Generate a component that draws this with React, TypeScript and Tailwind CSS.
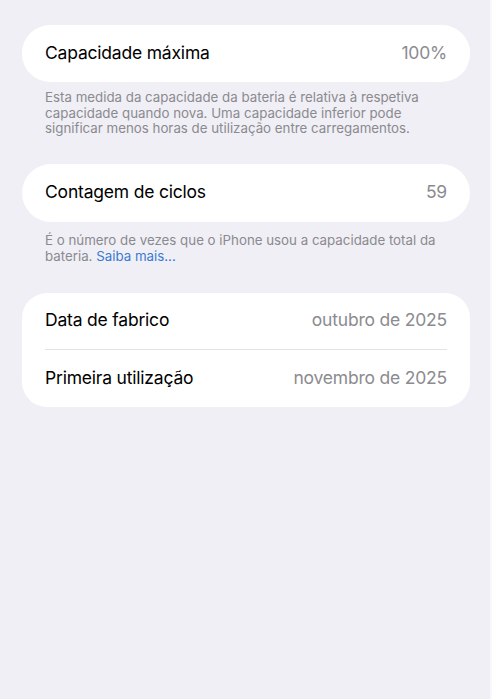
export default function App() {
  const font = { fontFamily: 'Inter, "Noto Sans", sans-serif' }
  return (
    <div
      className="min-h-[699px] w-full bg-[#f0eff5] border-r-2 border-[#f8f8fa] pl-[22px] pr-[20px] pt-[25px] antialiased"
      style={font}
    >
      <div className="flex h-[57px] items-center justify-between rounded-[28px] bg-white px-[23px] text-[17.5px] tracking-[-0.2px]">
        <span className="text-black">Capacidade máxima</span>
        <span className="text-[#8b8b90]">100%</span>
      </div>
      <p className="px-[23px] pt-[8px] text-[13.3px] leading-[15.5px] text-[#8a8a8f]">
        Esta medida da capacidade da bateria é relativa à respetiva capacidade quando nova. Uma capacidade inferior pode
        significar menos horas de utilização entre carregamentos.
      </p>

      <div className="mt-[27px] flex h-[58px] items-center justify-between rounded-[29px] bg-white px-[23px] text-[17.5px] tracking-[-0.2px]">
        <span className="text-black">Contagem de ciclos</span>
        <span className="text-[#8b8b90]">59</span>
      </div>
      <p className="px-[23px] pt-[10px] text-[13.3px] leading-[16px] text-[#8a8a8f]">
        É o número de vezes que o iPhone usou a capacidade total da bateria.{' '}
        <span className="text-[#3a7ad3]">Saiba mais...</span>
      </p>

      <div className="mt-[29px] rounded-[25px] bg-white px-[23px] text-[17.5px] tracking-[-0.2px]">
        <div className="flex h-[57px] items-center justify-between border-b border-[#e3e3e6]">
          <span className="text-black">Data de fabrico</span>
          <span className="text-[#8b8b90]">outubro de 2025</span>
        </div>
        <div className="flex h-[57px] items-center justify-between">
          <span className="text-black">Primeira utilização</span>
          <span className="text-[#8b8b90]">novembro de 2025</span>
        </div>
      </div>
    </div>
  )
}
